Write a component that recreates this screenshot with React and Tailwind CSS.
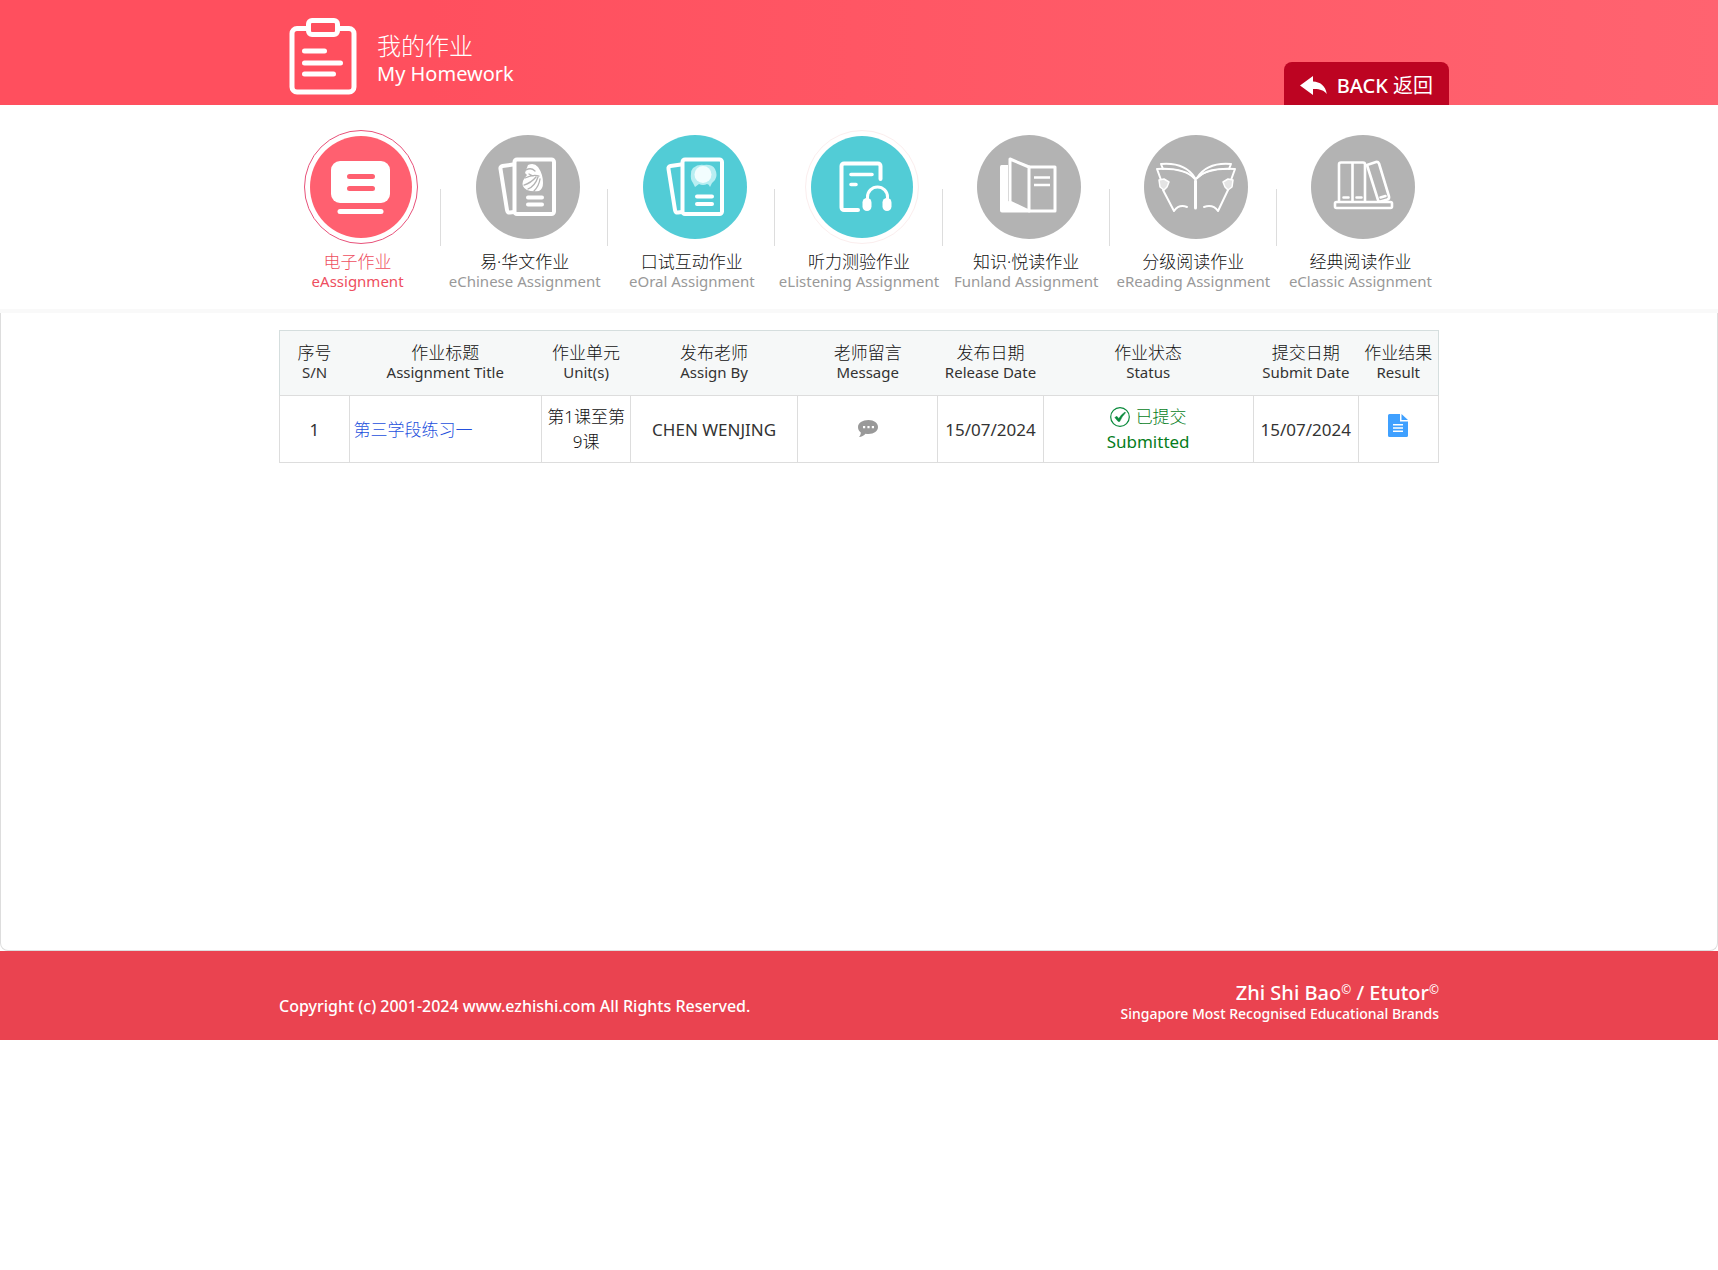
function ClipboardIcon() {
  return (
    <svg aria-hidden="true" className="h-[78px] w-[68px] shrink-0" viewBox="0 0 68 78" fill="none" stroke="#fff" strokeWidth="5" strokeLinecap="round" strokeLinejoin="round">
      <path d="M18 10.500H8a5 5 0 0 0-5 5V69a5 5 0 0 0 5 5h52a5 5 0 0 0 5-5V15.500a5 5 0 0 0-5-5H49" />
      <rect x="19.500" y="2.500" width="29" height="14" rx="3.500" />
      <path d="M15.500 33h20M15.500 45h36M15.500 56h29" />
    </svg>
  );
}

function Cards({ dx = 0, children }) {
  return (
    <g fill="none" stroke="#fff" strokeWidth="4" strokeLinecap="round" strokeLinejoin="round">
      <g transform={`translate(${dx} 0)`}>
        <rect x="46.500" y="32.500" width="39.500" height="54.500" rx="2.500" />
        <path d="M45 37.500l-10.500 1.500q-2.500.5-2 3l6.500 41q.5 3 3 2.500l4-.500" />
      </g>
      {children}
    </g>
  );
}

const art = {
  assignment: (
    <>
      <rect x="30" y="34" width="59" height="42" rx="9" fill="#fff" />
      <path d="M48.500 49.500h23M48.500 61.500h23" stroke="#ff6070" strokeWidth="5" strokeLinecap="round" />
      <path d="M39 84.500h41" stroke="#fff" strokeWidth="5" strokeLinecap="round" />
    </>
  ),
  chinese: (
    <Cards>
      <path d="M60 70.500h14M60 77.500h14" />
      <path d="M60 38q6-3 10 2 5 7 5 16 0 6-4 8-7 1-12-1-6-3-4-9 2-4 4-6l-2-2 3-8z" fill="#fff" stroke="none" />
      <path d="M58 43q5-3 9 1M57 51q8-4 14-2M56 58q7-2 12-8M60 62q7-3 10-12M66 64q5-5 6-12M61 47l4 2" stroke="#b3b3b3" strokeWidth="1.300" />
    </Cards>
  ),
  oral: (
    <Cards dx={1}>
      <path d="M62 69.500h15M62 77h15" />
      <path d="M58 41q5-4 11-3 8-1 11 4 3 6 0 11l-3 3-2 4q-1-3-3-3-4 2-8 0l-4 3-2-4q-3-4-2-9 0-4 2-6z" fill="#b8eef2" stroke="none" />
      <circle cx="68" cy="47.500" r="8.500" fill="#f2fdfe" stroke="none" />
    </Cards>
  ),
  listening: (
    <g fill="none" stroke="#fff" strokeWidth="4" strokeLinecap="round" strokeLinejoin="round">
      <path d="M56 83H42a2.500 2.500 0 0 1-2.500-2.500V39A2.500 2.500 0 0 1 42 36.500h34A2.500 2.500 0 0 1 78.500 39v13" />
      <path d="M49 47.500h21M49 57.500h5" strokeWidth="3.600" />
      <path d="M65.500 74v-4a10 10 0 0 1 20 0v4" strokeWidth="3" />
      <rect x="60.500" y="71" width="9" height="13" rx="4.500" fill="#fff" stroke="none" />
      <rect x="80.500" y="71" width="9" height="13" rx="4.500" fill="#fff" stroke="none" />
    </g>
  ),
  funland: (
    <g fill="none" stroke="#fff" strokeWidth="3" strokeLinejoin="round">
      <path d="M39 38h-6.500Q31 38 31 40v43.500q0 2 2 2H60v-3L39 74z" fill="#fff" stroke="none" />
      <path d="M41 32l19 8v44l-19-9z" fill="#b3b3b3" />
      <path d="M60 40h26v44H60" />
      <path d="M65 50.500h16M65 58h16" strokeWidth="2.600" />
    </g>
  ),
  reading: (
    <g fill="none" stroke="#fff" strokeWidth="2" strokeLinejoin="round" strokeLinecap="round">
      <path d="M59.500 54v27" strokeWidth="3" />
      <path d="M59 52C51 43 38 41 21 42l4 11M27 63l11 21q5-7 13-4M60 52c8-9 21-11 39-10l-4 11M92 63L82 84q-5-7-14-4" />
      <path d="M27 42l-2-5q24-2 34 14M93 42l2-5q-24-2-34 14" />
      <path d="M28 42q20-1 30 9M92 42q-20-1-30 9" strokeWidth="1" />
      <path d="M23 53l5-1 5 3-2 5-3 3-4-3zM97 53l-5-1-5 3 2 5 3 3 4-3z" fill="#e4e4e4" strokeWidth="1.500" />
    </g>
  ),
  classic: (
    <g fill="none" stroke="#fff" strokeWidth="2.600" strokeLinejoin="round" strokeLinecap="round">
      <path d="M36 74V37.500q0-2 2-2h22q2 0 2 2V74M49.500 36v38" />
      <path d="M64 38l9-3q2-.5 3 1.500l10 33q.5 2-1.500 3l-7 2q-2 .5-2.500-1.500z" />
      <rect x="32" y="75" width="57" height="6" rx="1.500" />
      <path d="M40.500 70.500h5M53.500 70.500h5M77.500 70.500l5-1.500" />
    </g>
  ),
};

const tabs = [
  { id: "assignment", cn: "电子作业", en: "eAssignment", fill: "#ff6070", ring: "#e8527a", active: true },
  { id: "chinese", cn: "易·华文作业", en: "eChinese Assignment", fill: "#b3b3b3" },
  { id: "oral", cn: "口试互动作业", en: "eOral Assignment", fill: "#52ccd6" },
  { id: "listening", cn: "听力测验作业", en: "eListening Assignment", fill: "#52ccd6", ring: "#fbeeee" },
  { id: "funland", cn: "知识·悦读作业", en: "Funland Assignment", fill: "#b3b3b3" },
  { id: "reading", cn: "分级阅读作业", en: "eReading Assignment", fill: "#b3b3b3" },
  { id: "classic", cn: "经典阅读作业", en: "eClassic Assignment", fill: "#b3b3b3" },
];

function Tab({ tab, divided }) {
  return (
    <li className="relative flex-1">
      <a href={`#${tab.id}`} className="flex flex-col items-center whitespace-nowrap">
        <svg aria-hidden="true" className="ml-1.5 size-[120px]" viewBox="0 0 120 120">
          {tab.ring && <circle cx="60" cy="60" r="56.500" fill="#fff" stroke={tab.ring} />}
          <circle cx="60" cy="60" r={tab.ring ? 51 : 52} fill={tab.fill} />
          {art[tab.id]}
        </svg>
        <span className={tab.active ? "mt-1 text-[17px] leading-[22px] font-light text-[#ee4e60]" : "mt-1 text-[17px] leading-[22px] font-light text-[#111]"}>{tab.cn}</span>
        <span className={tab.active ? "text-[15px] leading-4 text-[#ee4e60]" : "text-[15px] leading-4 text-[#999]"}>{tab.en}</span>
      </a>
      {divided && <span className="absolute top-[62px] right-0 h-[57px] w-px bg-[#ddd]" />}
    </li>
  );
}

const columns = [
  ["序号", "S/N", "w-[6%]"],
  ["作业标题", "Assignment Title", "w-[16.6%]"],
  ["作业单元", "Unit(s)", "w-[7.7%]"],
  ["发布老师", "Assign By", "w-[14.4%]"],
  ["老师留言", "Message", "w-[12.1%]"],
  ["发布日期", "Release Date", "w-[9.1%]"],
  ["作业状态", "Status", "w-[18.1%]"],
  ["提交日期", "Submit Date", "w-[9.1%]"],
  ["作业结果", "Result", "w-[6.9%]"],
];

function Cell({ children, className = "text-center" }) {
  return <td className={`border border-[#ddd] ${className}`}>{children}</td>;
}

function AssignmentTable() {
  return (
    <table className="w-full table-fixed border-collapse border border-[#d5dede] text-[17px] leading-[25px] text-[#333]">
      <thead className="bg-[#f6f8f8]">
        <tr className="h-[65px]">
          {columns.map(([cn, en, width]) => (
            <th key={en} scope="col" className={`${width} border-b border-[#ddd] pb-0.5 font-normal whitespace-nowrap`}>
              <span className="block text-[17px] leading-5 font-light text-[#111]">{cn}</span>
              <span className="block text-[15px] leading-[18px]">{en}</span>
            </th>
          ))}
        </tr>
      </thead>
      <tbody>
        <tr className="h-[67px]">
          <Cell>1</Cell>
          <Cell className="pl-1"><a href="#exercise" className="font-light text-[#2450dd]">第三学段练习一</a></Cell>
          <Cell className="text-center font-light text-[#111]">第1课至第<br />9课</Cell>
          <Cell>CHEN WENJING</Cell>
          <Cell>
            <button type="button" aria-label="Message" className="mx-auto block">
              <svg className="h-[18px] w-[22px]" viewBox="0 0 22 18">
                <path d="M11.500 0C17 0 21 3 21 7s-4 7-9.500 7c-1 0-2 0-3-.3C7 15.500 4.500 17 2 17c1.200-1.300 1.800-3 1.800-4.600C1.800 11 1 9.200 1 7c0-4 4.500-7 10.500-7z" fill="#999" />
                <path d="M6 6h2.200v2.200H6zM10.400 6h2.200v2.200h-2.200zM14.800 6H17v2.200h-2.200z" fill="#fff" />
              </svg>
            </button>
          </Cell>
          <Cell>15/07/2024</Cell>
          <Cell className="text-center text-[#067d1c]">
            <span className="flex items-center justify-center gap-1.5 font-light">
              <svg aria-hidden="true" className="size-5" viewBox="0 0 20 20" fill="none" stroke="#0a8a3c">
                <circle cx="10" cy="10" r="9.300" strokeWidth="1.200" />
                <path d="M4.800 10.500l2-1.200 2 2.300q2.500-4.300 6.200-6.600l.5.800q-3.500 3.500-5.800 8.700H8.200z" fill="#0a8a3c" strokeWidth=".5" />
              </svg>
              已提交
            </span>
            Submitted
          </Cell>
          <Cell>15/07/2024</Cell>
          <Cell>
            <a href="#result" aria-label="Result" className="mx-auto block w-5 pb-1.5">
              <svg className="h-6 w-5" viewBox="0 0 20 24">
                <path d="M1.500 0H12v7.500h8v14q0 1.500-1.500 1.500h-17Q0 23 0 21.500v-20Q0 0 1.500 0zM13.500 0L20 6h-6.500z" fill="#3fa0ff" />
                <path d="M5 10.800h10M5 14h10M5 17.200h10" stroke="#fff" strokeWidth="1.500" />
              </svg>
            </a>
          </Cell>
        </tr>
      </tbody>
    </table>
  );
}

export default function App() {
  return (
    <div className='font-["Noto_Sans","Noto_Sans_CJK_SC",sans-serif]' lang="zh-CN">
      <header className="bg-linear-to-r from-[#ff4f5e] from-25% to-[#ff6370] to-100%">
        <div className="mx-auto flex max-w-[1180px] items-end justify-between pl-5">
          <div className="flex items-center gap-5 pt-[18px] pb-[9px] text-white">
            <ClipboardIcon />
            <h1 className="pt-1.5">
              <span className="block text-2xl leading-7 font-light">我的作业</span>
              <span className="block text-xl leading-7">My Homework</span>
            </h1>
          </div>
          <button type="button" className="flex h-[43px] items-center gap-2.5 rounded-t-lg bg-[#bd0422] px-4 pt-1 text-xl text-white">
            <svg aria-hidden="true" className="h-5 w-[27px]" viewBox="0 0 27 20">
              <path d="M0 9.500L13 0v5.500c7 .3 12.500 4 13.800 12.500-3-4-7.500-5.300-13.800-5V19z" fill="#fff" />
            </svg>
            <span><span className="font-medium">BACK</span> 返回</span>
          </button>
        </div>
      </header>
      <nav className="border-b-4 border-[#f9f9f9] pt-[22px] pb-5">
        <ul className="mx-auto flex max-w-[1170px]">
          {tabs.map((tab, i) => (
            <Tab key={tab.id} tab={tab} divided={i < tabs.length - 1} />
          ))}
        </ul>
      </nav>
      <main className="min-h-[638px] rounded-b-lg border border-t-0 border-[#ddd] pt-[17px]">
        <div className="mx-auto max-w-[1160px]">
          <AssignmentTable />
        </div>
      </main>
      <footer className="bg-[#ea4350] text-white">
        <div className="mx-auto flex max-w-[1160px] items-end justify-between pt-[30px] pb-4">
          <p className="pb-1.5 text-base leading-6 font-medium">Copyright (c) 2001-2024 www.ezhishi.com All Rights Reserved.</p>
          <div className="text-right">
            <p className="text-xl leading-[23px] font-medium">Zhi Shi Bao<sup className="text-xs">©</sup> / Etutor<sup className="text-xs">©</sup></p>
            <p className="text-sm leading-5 font-medium">Singapore Most Recognised Educational Brands</p>
          </div>
        </div>
      </footer>
    </div>
  );
}
